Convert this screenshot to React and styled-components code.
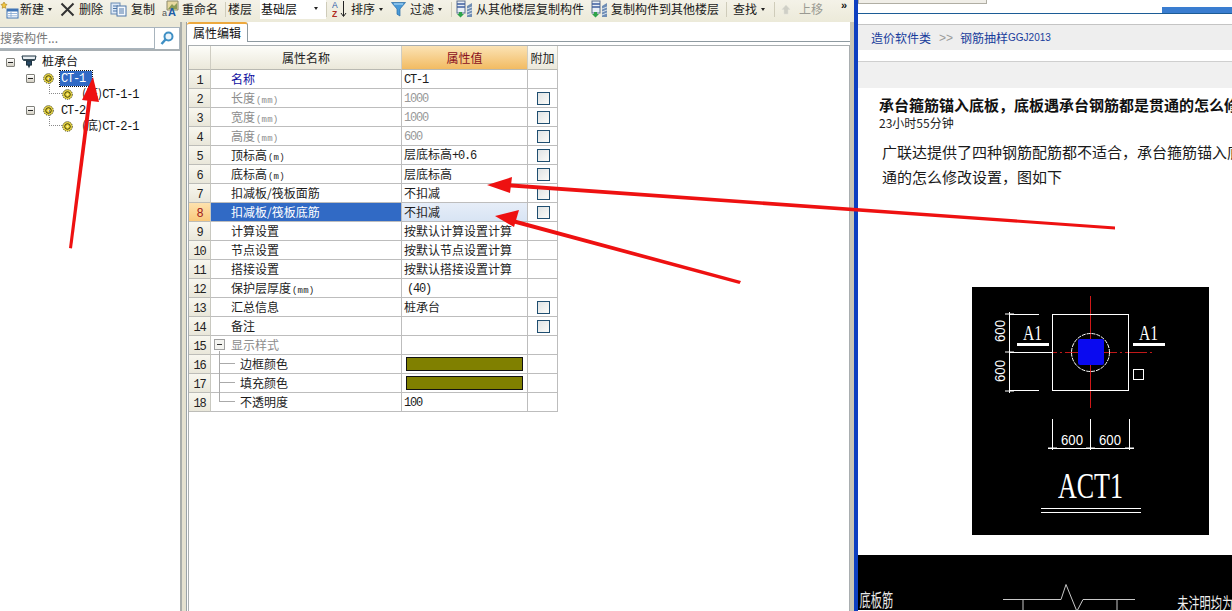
import React from "react";
import styled, { createGlobalStyle } from "styled-components";

const cjk = `"Noto Sans CJK SC", "Liberation Sans", sans-serif`;

const Global = createGlobalStyle`
  html, body { margin: 0; padding: 0; height: 611px; overflow: hidden; background: #fff; }
  body { font-family: ${cjk}; font-size: 12px; color: #111; }
  #root { height: 611px; }
`;

const Page = styled.div`
  position: relative;
  width: 1232px;
  height: 611px;
  display: flex;
  overflow: hidden;
`;
const AppPane = styled.div`
  width: 854px;
  flex: none;
  display: flex;
  flex-direction: column;
  background: #e9e6d6;
`;
const Toolbar = styled.div`
  height: 22px;
  flex: none;
  display: flex;
  align-items: flex-start;
  background: linear-gradient(#f4f2e8, #ecead9);
  white-space: nowrap;
`;
const Tool = styled.div`
  flex: none;
  display: flex;
  align-items: center;
  height: 18px;
  width: ${(p) => p.$w}px;
  margin-left: ${(p) => p.$ml || 0}px;
  color: ${(p) => (p.$off ? "#9a9a92" : "#1a1a1a")};
  line-height: 18px;
`;
const ToolIcon = styled.svg`
  flex: none;
  margin-left: ${(p) => p.$ml || 0}px;
  margin-right: ${(p) => p.$mr || 3}px;
`;
const Caret = styled.span`
  flex: none;
  margin-left: 4px;
  width: 0;
  height: 0;
  border-left: 2.5px solid transparent;
  border-right: 2.5px solid transparent;
  border-top: 3px solid #222;
`;
const Sep = styled.span`
  flex: none;
  width: 1px;
  height: 15px;
  margin: 2px ${(p) => p.$r ?? 2}px 0 ${(p) => p.$l ?? 2}px;
  background: #cfccba;
`;
const FloorSelect = styled.div`
  flex: none;
  width: 66px;
  height: 19px;
  margin-left: 8px;
  padding-left: 1px;
  box-sizing: border-box;
  background: #fff;
  display: flex;
  align-items: center;
  justify-content: space-between;
  line-height: 15px;
  padding-right: 8px;
  padding-bottom: 3px;
`;
const More = styled.span`
  flex: none;
  margin-left: 19px;
  font-family: "Liberation Sans", sans-serif;
  font-weight: 700;
  font-size: 11px;
  line-height: 11px;
`;

const Body = styled.div`
  flex: 1;
  display: flex;
  min-height: 0;
`;
const LeftPanel = styled.div`
  width: 180px;
  flex: none;
  background: #fff;
  border-right: 2px solid #a9adaa;
  box-sizing: content-box;
  display: flex;
  flex-direction: column;
`;
const SearchBar = styled.div`
  height: 29px;
  flex: none;
  background: #ece9d8;
  box-sizing: border-box;
  padding-top: 5px;
  display: flex;
  border-bottom: 2px solid #a9b0b4;
`;
const SearchInput = styled.div`
  width: 155px;
  height: 22px;
  box-sizing: border-box;
  background: #fff;
  border: 1px solid #a8b4bd;
  border-left: 0;
  color: #777;
  line-height: 20px;
  font-size: 12px;
`;
const SearchBtn = styled.div`
  flex: 1;
  height: 22px;
  display: flex;
  align-items: center;
  justify-content: center;
  background: #fff;
  border-right: 1px solid #a8b4bd;
  border-top: 1px solid #a8b4bd;
  box-sizing: border-box;
`;
const Tree = styled.div`
  padding-top: 3px;
  display: flex;
  flex-direction: column;
`;
const TreeRow = styled.div`
  position: relative;
  height: 16px;
  display: flex;
  align-items: center;
  padding-left: ${(p) => p.$indent}px;
  line-height: 16px;
  &::before {
    content: ${(p) => (p.$branch ? '""' : "none")};
    position: absolute;
    left: ${(p) => p.$branchX}px;
    top: ${(p) => -p.$branchUp}px;
    width: ${(p) => p.$branchW}px;
    height: ${(p) => p.$branchUp + 8}px;
    border-left: 1px dotted #8a8a8a;
    border-bottom: 1px dotted #8a8a8a;
    box-sizing: border-box;
  }
`;
const Expander = styled.span`
  position: relative;
  flex: none;
  width: 9px;
  height: 9px;
  box-sizing: border-box;
  margin-right: ${(p) => p.$mr || 7}px;
  border: 1px solid #80807a;
  border-radius: 1px;
  background: linear-gradient(#fff, #d4d0c4);
  &::after {
    content: "";
    position: absolute;
    left: 1px;
    right: 1px;
    top: 3px;
    height: 1px;
    background: #222;
  }
`;
const TreeLabel = styled.span`
  flex: none;
  margin-left: ${(p) => p.$ml || 6}px;
  width: ${(p) => (p.$sel ? "32px" : "auto")};
  height: 15px;
  line-height: 12px;
  padding: 0 1px;
  box-sizing: border-box;
  color: ${(p) => (p.$sel ? "#fff" : "#111")};
  background: ${(p) => (p.$sel ? "#316ac5" : "transparent")};
  outline: ${(p) => (p.$sel ? "1px dotted #111" : "none")};
`;
const Mono = styled.span`
  font-family: "Liberation Mono", monospace;
  font-size: 12px;
  letter-spacing: -1.2px;
`;
const CellMono = styled(Mono)`
  padding-top: 3px;
  margin-left: ${(p) => p.$ml || 0}px;
`;
const Unit = styled.span`
  font-family: "Liberation Mono", monospace;
  font-size: 9px;
  letter-spacing: 0.2px;
  margin-left: 1px;
`;

const Gutter = styled.div`
  width: 4px;
  flex: none;
  background: #e4e1d0;
`;
const MainPane = styled.div`
  flex: 1;
  min-width: 0;
  background: #fff;
  border-left: 1px solid #9aa3a8;
  border-right: 4px solid #c9c6b6;
  display: flex;
  flex-direction: column;
`;
const TabStrip = styled.div`
  height: 20px;
  flex: none;
  border-bottom: 1px solid #8e9aa0;
  display: flex;
  box-sizing: border-box;
`;
const Tab = styled.div`
  width: 61px;
  height: 20px;
  box-sizing: border-box;
  background: #fff;
  border: 1px solid #8e9aa0;
  border-top: 2px solid #eda93e;
  border-left: 0;
  border-bottom: 0;
  border-radius: 3px 3px 0 0;
  text-align: center;
  line-height: 17px;
`;
const Frame = styled.div`
  flex: 1;
  margin: 3px 0 0 1px;
  border: 1px solid #a9aeb0;
  border-bottom: 0;
`;
const Grid = styled.div`
  width: 369px;
  display: grid;
  grid-template-columns: 22px 191px 126px 30px;
  grid-template-rows: 24px;
  grid-auto-rows: 19px;
`;
const HeadCell = styled.div`
  box-sizing: border-box;
  border-right: 1px solid #cfcdc2;
  border-bottom: 1px solid #b9b9b2;
  background: ${(p) =>
    p.$active
      ? "linear-gradient(#fbe3b5, #f2bb62)"
      : "linear-gradient(#fdfdf9, #ebe8da)"};
  color: ${(p) => (p.$active ? "#8a1020" : "#222")};
  text-align: center;
  line-height: 23px;
`;
const NumCell = styled.div`
  box-sizing: border-box;
  border-right: 1px solid #c8c8c0;
  border-bottom: 1px solid #bdbdb8;
  background: ${(p) =>
    p.$active
      ? "linear-gradient(#fde2ae, #f9c97c)"
      : "linear-gradient(#f8f7ef, #e9e7da)"};
  color: ${(p) => (p.$active ? "#a01818" : "#222")};
  text-align: center;
  line-height: 17px;
`;
const NameCell = styled.div`
  position: relative;
  box-sizing: border-box;
  border-right: 1px solid #bdbdbd;
  border-bottom: 1px solid #bdbdbd;
  padding-left: ${(p) => (p.$sub ? 29 : 20)}px;
  line-height: 18px;
  white-space: nowrap;
  background: ${(p) => (p.$sel ? "#316ac5" : "#fff")};
  color: ${(p) =>
    p.$sel ? "#fff" : p.$tone === "link" ? "#1010a0" : p.$tone === "off" ? "#8c8c8c" : "#1c1c1c"};
`;
const ValueCell = styled.div`
  box-sizing: border-box;
  border-right: 1px solid #bdbdbd;
  border-bottom: 1px solid #bdbdbd;
  padding: 0 0 1px 2px;
  line-height: 17px;
  white-space: nowrap;
  display: flex;
  align-items: center;
  background: ${(p) => (p.$sel ? "linear-gradient(#e6edf8, #d8e4f4)" : "#fff")};
  color: ${(p) => (p.$off ? "#999" : "#1c1c1c")};
`;
const ExtraCell = styled.div`
  box-sizing: border-box;
  border-right: 1px solid #bdbdbd;
  border-bottom: 1px solid #bdbdbd;
  display: flex;
  align-items: center;
  justify-content: center;
  padding-left: 1px;
`;
const Check = styled.span`
  width: 13px;
  height: 13px;
  box-sizing: border-box;
  border: 1px solid #1f4e70;
  background: linear-gradient(135deg, #dfe3e4, #fbfbf8);
`;
const Swatch = styled.span`
  width: 117px;
  height: 14px;
  margin-left: 2px;
  box-sizing: border-box;
  border: 1px solid #111;
  background: #808000;
`;
const Collapse = styled.span`
  position: absolute;
  left: 3px;
  top: 3px;
  width: 11px;
  height: 11px;
  box-sizing: border-box;
  border: 1px solid #a0a0a0;
  background: #f4f4f0;
  &::after {
    content: "";
    position: absolute;
    left: 2px;
    right: 2px;
    top: 4px;
    height: 1px;
    background: #333;
  }
`;
const TreeLine = styled.span`
  position: absolute;
  left: 8px;
  top: ${(p) => (p.$first ? -4 : -1)}px;
  width: 16px;
  height: ${(p) => (p.$first ? 13 : 10)}px;
  box-sizing: border-box;
  border-bottom: 1px solid #aaa;
  border-left: 1px solid #aaa;
`;
const TreeStem = styled.span`
  position: absolute;
  left: 8px;
  top: 0;
  bottom: 0;
  width: 1px;
  background: #aaa;
`;

const Browser = styled.div`
  flex: 1;
  min-width: 0;
  border-left: 4px solid #0e3fc0;
  display: flex;
  flex-direction: column;
  background: #fff;
`;
const TopStrip = styled.div`
  position: relative;
  height: 14px;
  flex: none;
  box-sizing: border-box;
  border-bottom: 1px solid #1c5c96;
  display: flex;
`;
const TabStub = styled.div`
  height: ${(p) => p.$h}px;
  width: ${(p) => p.$w}px;
  margin-left: ${(p) => p.$ml}px;
  box-sizing: border-box;
  background: ${(p) => p.$bg};
  border: ${(p) => (p.$line ? "1px solid #b0aea4" : "none")};
  border-top: 0;
  align-self: ${(p) => (p.$end ? "flex-end" : "flex-start")};
  flex: none;
`;
const Spacer = styled.div`
  height: ${(p) => p.$h}px;
  flex: none;
  box-sizing: border-box;
  background: ${(p) => p.$bg || "#fff"};
  border-bottom: ${(p) => (p.$line ? `1px solid ${p.$line}` : "none")};
`;
const Crumbs = styled.div`
  height: 26px;
  flex: none;
  box-sizing: border-box;
  border-top: 1px solid #c4c4c4;
  background: #eeeeee;
  padding-left: 13px;
  display: flex;
  align-items: center;
  color: #173c9c;
  font-size: 12px;
  white-space: nowrap;
`;
const CrumbSep = styled.span`
  color: #9a9a9a;
  margin: 0 7px 0 8px;
  font-family: "Liberation Sans", sans-serif;
`;
const CrumbLatin = styled.span`
  font-family: "Liberation Sans", sans-serif;
  font-size: 10px;
`;
const Article = styled.div`
  padding: 7px 0 0 21px;
  white-space: nowrap;
  overflow: hidden;
`;
const Title = styled.div`
  font-size: 15px;
  font-weight: 700;
  line-height: 20px;
  color: #111;
`;
const Time = styled.div`
  font-size: 12px;
  line-height: 16px;
  color: #222;
`;
const Para = styled.div`
  margin: 8px 0 0 3px;
  font-size: 15px;
  line-height: 25px;
  color: #1a1a1a;
`;
const CadWrap = styled.div`
  margin: 98px 0 0 93px;
  display: flex;
`;
const CadImage = styled.svg`
  display: block;
  flex: none;
  background: #000;
`;
const CadStrip = styled.svg`
  display: block;
  flex: none;
  margin-top: 20px;
  background: #000;
`;
const Overlay = styled.svg`
  position: absolute;
  left: 0;
  top: 0;
  pointer-events: none;
`;

const NewIcon = () => (
  <ToolIcon width="19" height="19" viewBox="0 0 19 19" $mr={1}>
    <path d="M4 2l1 2 2 .5-1.500 1.600.3 2.200L4 7.300 2.200 8.300l.3-2.200L1 4.500 3 4z" fill="#f2c53d" stroke="#a47d16" strokeWidth=".6" />
    <rect x="7" y="9" width="11" height="9" fill="#fff" stroke="#3f74b5" />
    <rect x="7" y="9" width="11" height="2.500" fill="#3f74b5" />
    <path d="M8 13.500h9M8 15.800h9M11 12v5" stroke="#7fa4d0" strokeWidth=".8" />
  </ToolIcon>
);
const DelIcon = () => (
  <ToolIcon width="15" height="15" viewBox="0 0 15 15" $mr={4}>
    <path d="M1.500 1.500l12 12M13.500 1.500l-12 12" stroke="#333" strokeWidth="2" />
  </ToolIcon>
);
const CopyIcon = () => (
  <ToolIcon width="17" height="15" viewBox="0 0 17 15" $mr={4}>
    <rect x="1" y="1" width="9" height="11" fill="#dce8f6" stroke="#6a8bb4" />
    <path d="M3 4h5M3 6.500h5M3 9h5" stroke="#4f77a8" />
    <rect x="7" y="4" width="9" height="10" fill="#f4f8fd" stroke="#4f77a8" />
    <path d="M9 7h5M9 9h5M9 11h5" stroke="#4f77a8" />
  </ToolIcon>
);
const RenameIcon = () => (
  <ToolIcon width="17" height="18" viewBox="0 0 17 18" $mr={3}>
    <path d="M5 1h11v9H5z" fill="#e8d9a0" stroke="#8c8a6c" />
    <path d="M6 9l4-5 2 2 3-3v6z" fill="#8a9a55" />
    <text x="0" y="16" fontSize="9" fill="#555" fontFamily="Liberation Sans">a</text>
    <text x="6" y="16" fontSize="11" fontWeight="700" fill="#1d5da8" fontFamily="Liberation Sans">A</text>
  </ToolIcon>
);
const SortIcon = () => (
  <ToolIcon width="16" height="18" viewBox="0 0 16 18" $mr={3}>
    <text x="0" y="8" fontSize="8.500" fill="#2a5aa8" fontFamily="Liberation Sans">A</text>
    <text x="0" y="17" fontSize="8.500" fontWeight="700" fill="#b02a20" fontFamily="Liberation Sans">Z</text>
    <path d="M11.500 1v15M9 13l2.500 3.500L14 13" fill="none" stroke="#222" />
  </ToolIcon>
);
const FilterIcon = () => (
  <ToolIcon width="15" height="16" viewBox="0 0 15 16" $mr={4}>
    <path d="M.5 1.500h14L9 8v7l-3-1.800V8z" fill="#4a9ad8" stroke="#2a6aa4" strokeWidth=".7" />
    <path d="M3 3h9" stroke="#bfe2f8" />
  </ToolIcon>
);
const FloorIcon = () => (
  <ToolIcon width="17" height="18" viewBox="0 0 17 18" $mr={3}>
    <rect x="1" y="1" width="8" height="12" fill="#e8eef6" stroke="#5a6e90" />
    <path d="M1 4h8M1 7h8" stroke="#3f5f9f" strokeWidth="1.500" />
    <path d="M3 12h3v2h2l-3.500 3.500L1 14h2z" fill="#2ea34a" />
    <path d="M11 6l5-3v14h-5z" fill="#6f8db4" />
    <path d="M11 9l5-2M11 12l5-2M11 15l5-2" stroke="#d8e2ee" />
  </ToolIcon>
);
const UpIcon = () => (
  <ToolIcon width="10" height="11" viewBox="0 0 10 11" $mr={8}>
    <path d="M5 1l4 4.500H7V10H3V5.500H1z" fill="#cfcfc6" stroke="#dcdcd4" strokeWidth=".5" />
  </ToolIcon>
);
const SearchIcon = () => (
  <svg width="14" height="15" viewBox="0 0 14 15">
    <circle cx="8.500" cy="5.500" r="4" fill="#eaf4fb" stroke="#3e8fc4" strokeWidth="2" />
    <path d="M5.500 8.500L1.500 13" stroke="#3e8fc4" strokeWidth="2.500" />
  </svg>
);
const CapIcon = () => (
  <svg width="16" height="14" viewBox="0 0 16 14" style={{ flex: "none" }}>
    <path d="M1 1h14l-1 4H2z" fill="#e8eef2" stroke="#1c3340" />
    <path d="M2.500 5h11" stroke="#1c3340" strokeWidth="1.500" />
    <rect x="5.500" y="6" width="5" height="4" fill="#2a4a66" stroke="#1c3340" />
    <path d="M6.500 10h3l-1.500 3.500z" fill="#1c3340" />
  </svg>
);
const GearIcon = () => (
  <svg width="11" height="11" viewBox="0 0 11 11" style={{ flex: "none" }}>
    <circle cx="5.500" cy="5.500" r="4.800" fill="#f4e04a" stroke="#3a3a10" strokeWidth="1" strokeDasharray="1.300 .9" />
    <circle cx="5.500" cy="5.500" r="2.800" fill="#e8d02c" stroke="#3a3a10" strokeWidth="1" />
    <circle cx="5.500" cy="5.500" r="1" fill="#f8f0a0" />
  </svg>
);

const rows = [
  { n: 1, name: "名称", tone: "link", value: <CellMono>CT-1</CellMono> },
  { n: 2, name: "长度", unit: "(mm)", tone: "off", value: <CellMono>1000</CellMono>, off: true, check: true },
  { n: 3, name: "宽度", unit: "(mm)", tone: "off", value: <CellMono>1000</CellMono>, off: true, check: true },
  { n: 4, name: "高度", unit: "(mm)", tone: "off", value: <CellMono>600</CellMono>, off: true, check: true },
  { n: 5, name: "顶标高", unit: "(m)", value: <span>层底标高<Mono>+0.6</Mono></span>, check: true },
  { n: 6, name: "底标高", unit: "(m)", value: "层底标高", check: true },
  { n: 7, name: "扣减板/筏板面筋", value: "不扣减", check: true },
  { n: 8, name: "扣减板/筏板底筋", value: "不扣减", check: true, sel: true },
  { n: 9, name: "计算设置", value: "按默认计算设置计算" },
  { n: 10, name: "节点设置", value: "按默认节点设置计算" },
  { n: 11, name: "搭接设置", value: "按默认搭接设置计算" },
  { n: 12, name: "保护层厚度", unit: "(mm)", value: <CellMono $ml={3}>(40)</CellMono> },
  { n: 13, name: "汇总信息", value: "桩承台", check: true },
  { n: 14, name: "备注", value: "", check: true },
  { n: 15, name: "显示样式", tone: "off", value: "", group: true },
  { n: 16, name: "边框颜色", value: <Swatch />, sub: true },
  { n: 17, name: "填充颜色", value: <Swatch />, sub: true },
  { n: 18, name: "不透明度", value: <CellMono>100</CellMono>, sub: true, last: true },
];

const Cad = () => (
  <CadImage width="237" height="248" viewBox="0 0 237 248">
    <path d="M63 65.500h117" stroke="#c01818" strokeDasharray="22 3 2 3" />
    <path d="M118.500 9v112" stroke="#d01818" />
    <rect x="80.500" y="27.500" width="76" height="76" fill="none" stroke="#fff" />
    <circle cx="118.500" cy="65.500" r="19" fill="none" stroke="#fff" strokeDasharray="4 1" />
    <rect x="106" y="52" width="26" height="26" rx="2" fill="#0a0af0" />
    <g fill="#fff" fontFamily="Liberation Serif, serif" fontSize="20">
      <text x="51" y="53" textLength="19" lengthAdjust="spacingAndGlyphs">A1</text>
      <text x="167" y="53" textLength="19" lengthAdjust="spacingAndGlyphs">A1</text>
    </g>
    <path d="M45 57.500h32M161 57.500h32" stroke="#fff" strokeWidth="3" />
    <rect x="161.500" y="82.500" width="10" height="10" fill="none" stroke="#fff" />
    <path d="M37.500 25v81M37 27.500h30M37 65.500h43M37 103.500h30" stroke="#fff" />
    <path d="M33 27h9M33 65h9M33 104h9M80.500 132v31M118.500 132v31M157.500 132v31M76 161.500h86M76 161h9M114 161h9M153 161h9" stroke="#fff" />
    <g fill="#fff" fontFamily="Liberation Sans, sans-serif" fontSize="15">
      <text transform="translate(33 55) rotate(-90)" textLength="22" lengthAdjust="spacingAndGlyphs">600</text>
      <text transform="translate(33 95) rotate(-90)" textLength="22" lengthAdjust="spacingAndGlyphs">600</text>
      <text x="89" y="158" textLength="22" lengthAdjust="spacingAndGlyphs">600</text>
      <text x="127" y="158" textLength="22" lengthAdjust="spacingAndGlyphs">600</text>
    </g>
    <text x="86" y="211" fill="#fff" fontFamily="Liberation Serif, serif" fontSize="35" textLength="65" lengthAdjust="spacingAndGlyphs">ACT1</text>
    <path d="M69 221.500h100M69 225.500h100" stroke="#fff" />
  </CadImage>
);

const Strip = () => (
  <CadStrip width="374" height="55" viewBox="0 0 374 55">
    <text x="2" y="49" fill="#e8e8e8" fontFamily="Noto Sans CJK SC, sans-serif" fontSize="14" transform="translate(0 -12) scale(0.8 1.3)">底板筋</text>
    <path d="M145 44.500h58l5-15 11 27M219 56l6-11.500h52M165 44v11M259 44v11" fill="none" stroke="#c8c8c8" />
    <text x="319" y="54" fill="#f0f0f0" fontFamily="Noto Sans CJK SC, sans-serif" fontSize="14" transform="translate(64 -12) scale(0.8 1.25)">未注明均为</text>
  </CadStrip>
);

export default function App() {
  return (
    <Page>
      <Global />
      <AppPane>
        <Toolbar>
          <Tool $w={60}><NewIcon />新建<Caret /></Tool>
          <Tool $w={50}><DelIcon />删除</Tool>
          <Tool $w={52}><CopyIcon />复制</Tool>
          <Tool $w={63}><RenameIcon />重命名</Tool>
          <Sep $l={0} $r={2} />
          <Tool $w={24}>楼层</Tool>
          <FloorSelect><span>基础层</span><Caret /></FloorSelect>
          <Sep $l={0} $r={5} />
          <Tool $w={54}><SortIcon />排序<Caret /></Tool>
          <Tool $w={59} $ml={5}><FilterIcon />过滤<Caret /></Tool>
          <Sep $l={1} $r={4} />
          <Tool $w={135}><FloorIcon />从其他楼层复制构件</Tool>
          <Tool $w={135}><FloorIcon />复制构件到其他楼层</Tool>
          <Sep $l={0} $r={6} />
          <Tool $w={41}>查找<Caret /></Tool>
          <Sep $l={0} $r={6} />
          <Tool $w={41} $off><UpIcon />上移</Tool>
          <More>»</More>
        </Toolbar>
        <Body>
          <LeftPanel>
            <SearchBar>
              <SearchInput>搜索构件...</SearchInput>
              <SearchBtn><SearchIcon /></SearchBtn>
            </SearchBar>
            <Tree>
              <TreeRow $indent={6}>
                <Expander $mr={6} /><CapIcon /><TreeLabel $ml={4}>桩承台</TreeLabel>
              </TreeRow>
              <TreeRow $indent={26}>
                <Expander $mr={8} /><GearIcon /><TreeLabel $sel $ml={6}><Mono>CT-1</Mono></TreeLabel>
              </TreeRow>
              <TreeRow $indent={62} $branch $branchX={49} $branchUp={8} $branchW={13}>
                <GearIcon /><TreeLabel $ml={8}>(底)<Mono>CT-1-1</Mono></TreeLabel>
              </TreeRow>
              <TreeRow $indent={26}>
                <Expander $mr={8} /><GearIcon /><TreeLabel $ml={6}><Mono>CT-2</Mono></TreeLabel>
              </TreeRow>
              <TreeRow $indent={62} $branch $branchX={49} $branchUp={8} $branchW={13}>
                <GearIcon /><TreeLabel $ml={8}>(底)<Mono>CT-2-1</Mono></TreeLabel>
              </TreeRow>
            </Tree>
          </LeftPanel>
          <Gutter />
          <MainPane>
            <TabStrip><Tab>属性编辑</Tab></TabStrip>
            <Frame>
              <Grid>
                <HeadCell />
                <HeadCell>属性名称</HeadCell>
                <HeadCell $active>属性值</HeadCell>
                <HeadCell>附加</HeadCell>
                {rows.map((r) => (
                  <React.Fragment key={r.n}>
                    <NumCell $active={r.sel}><Mono>{r.n}</Mono></NumCell>
                    <NameCell $sel={r.sel} $tone={r.tone} $sub={r.sub}>
                      {r.group && <Collapse />}
                      {r.sub && <TreeLine $first={r.n === 16} />}
                      {r.sub && !r.last && <TreeStem />}
                      {r.name}
                      {r.unit && <Unit>{r.unit}</Unit>}
                    </NameCell>
                    <ValueCell $sel={r.sel} $off={r.off}>{r.value}</ValueCell>
                    <ExtraCell>{r.check && <Check />}</ExtraCell>
                  </React.Fragment>
                ))}
              </Grid>
            </Frame>
          </MainPane>
        </Body>
      </AppPane>
      <Browser>
        <TopStrip>
          <TabStub $w={129} $h={4} $ml={0} $bg="#f0eee8" $line />
          <TabStub $w={175} $h={6} $ml={175} $bg="#3a7dd0" $end />
          <TabStub $w={24} $h={4} $ml={46} $bg="#f0eee8" $line />
        </TopStrip>
        <Spacer $h={10} />
        <Crumbs>
          造价软件类<CrumbSep>&gt;&gt;</CrumbSep>钢筋抽样<CrumbLatin>GGJ2013</CrumbLatin>
        </Crumbs>
        <Spacer $h={12} $line="#cfcfcf" />
        <Spacer $h={26} $bg="#f0f0f0" />
        <Article>
          <Title>承台箍筋锚入底板，底板遇承台钢筋都是贯通的怎么修</Title>
          <Time>23小时55分钟</Time>
          <Para>
            广联达提供了四种钢筋配筋都不适合，承台箍筋锚入底
            <br />
            通的怎么修改设置，图如下
          </Para>
          <CadWrap><Cad /></CadWrap>
        </Article>
        <Strip />
      </Browser>
      <Overlay width="1232" height="611" viewBox="0 0 1232 611">
        <g fill="#ee1111">
          <path d="M69 248l19-153 4 .5L72 248.500z" />
          <path d="M93 77l6 25-17-2z" />
          <path d="M1115 226.500L505 183l-.3 4L1115 229.500z" />
          <path d="M487 185l25-8-2 16z" />
          <path d="M741 281L513 219l-1 4L739.500 284z" />
          <path d="M495 216l24-6-5 17z" />
        </g>
      </Overlay>
    </Page>
  );
}
